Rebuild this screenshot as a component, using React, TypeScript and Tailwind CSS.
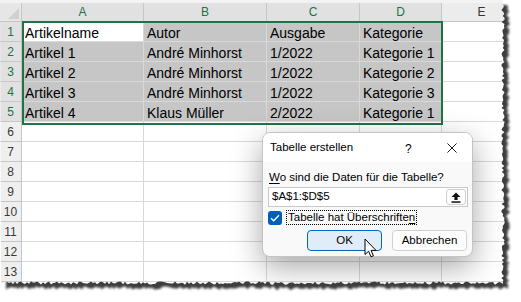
import React from "react";

const rows: string[][] = [
  ["Artikelname", "Autor", "Ausgabe", "Kategorie"],
  ["Artikel 1", "André Minhorst", "1/2022", "Kategorie 1"],
  ["Artikel 2", "André Minhorst", "1/2022", "Kategorie 2"],
  ["Artikel 3", "André Minhorst", "1/2022", "Kategorie 3"],
  ["Artikel 4", "Klaus Müller", "2/2022", "Kategorie 1"],
];

const colW = ["w-[122px]", "w-[123px]", "w-[93px]", "w-[82px]"];
const colLetters = ["A", "B", "C", "D"];

function rand(i: number) {
  const s = Math.sin(i * 12.9898 + 78.233) * 43758.5453;
  return s - Math.floor(s);
}

function buildPage() {
  const pts: [number, number][] = [[0, 0]];
  for (let y = 0; y <= 282; y += 2) {
    pts.push([503 + (rand(y) - 0.5) * 3.5, y]);
  }
  for (let x = 503; x >= 0; x -= 2) {
    pts.push([x, 283 + (rand(x + 1000) - 0.5) * 3.5]);
  }
  return "M" + pts.map((p) => `${p[0].toFixed(1)} ${p[1].toFixed(1)}`).join(" L") + " Z";
}

function TornEdge() {
  const page = buildPage();
  const outside = "M0 0 H521 V302 H0 Z " + page;
  return (
    <svg className="absolute left-0 top-0 pointer-events-none" width="521" height="302" viewBox="0 0 521 302">
      <defs>
        <clipPath id="outsideClip">
          <path d={outside} clipRule="evenodd" />
        </clipPath>
        <filter id="blurF" x="-10%" y="-10%" width="120%" height="120%">
          <feGaussianBlur stdDeviation="1.2" />
        </filter>
      </defs>
      <path d={outside} fill="#ffffff" fillRule="evenodd" />
      <g clipPath="url(#outsideClip)">
        <path d={page} transform="translate(5 5)" fill="#3c3c3c" filter="url(#blurF)" />
      </g>
    </svg>
  );
}

function Cursor() {
  return (
    <svg className="absolute left-[364px] top-[238px]" width="14" height="21" viewBox="0 0 14 21">
      <path
        d="M1 1 L1 16.5 L4.6 13.2 L7 18.8 L9.4 17.8 L7.1 12.4 L12 12.4 Z"
        fill="#ffffff"
        stroke="#000000"
        strokeWidth="1"
        strokeLinejoin="miter"
      />
    </svg>
  );
}

function Dialog() {
  return (
    <div
      className="absolute left-[262px] top-[132px] w-[211px] h-[125px] rounded-[8px] border border-[#c4c4c4] bg-[#f9f9f9] shadow-[0_10px_30px_rgba(0,0,0,0.35)] flex flex-col overflow-hidden text-[11.5px] text-black"
      style={{ fontFamily: '"Liberation Sans", Arial, sans-serif' }}
    >
      <div className="h-[29px] flex items-center bg-[#ffffff] pl-[7px] relative">
        <span className="text-[11.5px]">Tabelle erstellen</span>
        <span className="absolute left-[142px] top-[7px] text-[12px]">?</span>
        <svg className="absolute left-[184px] top-[10px]" width="10" height="10" viewBox="0 0 10 10">
          <path d="M0.5 0.5 L9.5 9.5 M9.5 0.5 L0.5 9.5" stroke="#1a1a1a" strokeWidth="1" />
        </svg>
      </div>
      <div className="flex flex-col pl-[5px] pr-[4px]">
        <div className="mt-[7px] h-[16px] leading-[16px] pl-[1px]">
          <span className="underline underline-offset-2">W</span>o sind die Daten für die Tabelle?
        </div>
        <div className="mt-[2px] h-[20px] border border-[#c8c8c8] bg-white flex items-center justify-between pl-[3px] pr-[1px]">
          <span className="text-[11.5px]">$A$1:$D$5</span>
          <div className="w-[20px] h-[16px] border border-[#cfcfcf] rounded-[3px] bg-[#fdfdfd] flex items-center justify-center">
            <svg width="10" height="11" viewBox="0 0 10 11">
              <path d="M5 0.5 L9.5 5 L6.6 5 L6.6 8 L3.4 8 L3.4 5 L0.5 5 Z" fill="#111" />
              <rect x="0.5" y="9.3" width="9" height="1.5" fill="#111" />
            </svg>
          </div>
        </div>
        <div className="mt-[3px] h-[15px] flex items-center">
          <div className="w-[14px] h-[14px] rounded-[3px] bg-[#005fb8] flex items-center justify-center">
            <svg width="10" height="8" viewBox="0 0 10 8">
              <path d="M1 4.2 L3.7 6.8 L9 1.2" fill="none" stroke="#ffffff" strokeWidth="1.3" />
            </svg>
          </div>
          <div className="ml-[4px] h-[15px] border border-dotted border-black px-[1px] leading-[13px] flex items-center">
            Tabelle hat Überschrifte<span className="underline underline-offset-2">n</span>
          </div>
        </div>
        <div className="mt-[5px] flex justify-end gap-[10px] pr-[1px]">
          <div className="w-[75px] h-[21px] rounded-[4px] border border-[#0067c0] bg-[#e0ecf8] flex items-center justify-center">
            OK
          </div>
          <div className="w-[75px] h-[21px] rounded-[4px] border border-[#d0d0d0] bg-[#fdfdfd] flex items-center justify-center">
            Abbrechen
          </div>
        </div>
      </div>
    </div>
  );
}

export default function App() {
  const emptyRows = [6, 7, 8, 9, 10, 11, 12, 13, 14];
  return (
    <div
      className="relative w-[521px] h-[302px] bg-white overflow-hidden"
      style={{ fontFamily: '"Liberation Sans", Arial, sans-serif' }}
    >
      <div className="flex flex-col w-[540px]">
        <div className="h-[3px] bg-[#f3f3f3]" />
        <div className="flex h-[19px]">
          <div className="w-[22px] h-[19px] bg-[#e6e6e6] border-r border-b border-[#c6c6c6] relative">
            <svg className="absolute right-[2px] bottom-[2px]" width="11" height="11" viewBox="0 0 11 11">
              <path d="M11 0 L11 11 L0 11 Z" fill="#d0d0d0" />
            </svg>
          </div>
          {colLetters.map((l, i) => (
            <div
              key={l}
              className={`${colW[i]} h-[19px] bg-[#e1e1e1] border-r border-b border-[#c6c6c6] flex items-center justify-center text-[12px] text-[#217346]`}
            >
              {l}
            </div>
          ))}
          <div className="w-[80px] h-[19px] bg-[#ececec] border-r border-b border-[#c6c6c6] flex items-center justify-center text-[12px] text-[#333]">
            E
          </div>
        </div>
        {rows.map((r, ri) => (
          <div key={ri} className="flex h-[20px]">
            <div className="w-[22px] h-[20px] bg-[#e1e1e1] border-r border-b border-[#c6c6c6] flex items-center justify-center text-[12px] text-[#217346]">
              {ri + 1}
            </div>
            {r.map((t, ci) => (
              <div
                key={ci}
                className={`${colW[ci]} h-[20px] ${
                  ri === 0 && ci === 0 ? "bg-white" : "bg-[#c6c6c6]"
                } border-r border-b border-[#d9d9d9] pl-[3px] pt-[3px] leading-[16px] text-[14px] text-black whitespace-nowrap overflow-hidden`}
              >
                {t}
              </div>
            ))}
            <div className="w-[80px] h-[20px] bg-white border-r border-b border-[#d9d9d9]" />
          </div>
        ))}
        {emptyRows.map((n) => (
          <div key={n} className="flex h-[20px]">
            <div className="w-[22px] h-[20px] bg-[#efefef] border-r border-b border-[#c6c6c6] flex items-center justify-center text-[12px] text-[#3a3a3a]">
              {n}
            </div>
            {colW.map((w, ci) => (
              <div key={ci} className={`${w} h-[20px] bg-white border-r border-b border-[#d9d9d9]`} />
            ))}
            <div className="w-[80px] h-[20px] bg-white border-r border-b border-[#d9d9d9]" />
          </div>
        ))}
      </div>
      <div className="absolute left-[22px] top-[21px] w-[421px] h-[104px] border-2 border-[#217346] pointer-events-none" />
      <Dialog />
      <Cursor />
      <TornEdge />
    </div>
  );
}
